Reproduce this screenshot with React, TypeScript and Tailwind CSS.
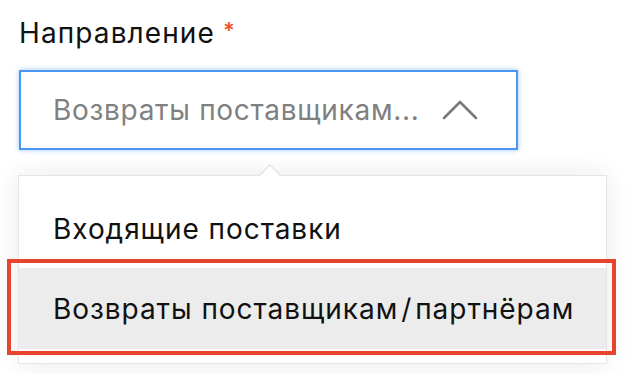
import React from 'react';

const font = { fontFamily: 'Inter, "Noto Sans", sans-serif' };

export default function App() {
  return (
    <div className="w-[640px] h-[374px] bg-white overflow-hidden text-[#111]" style={font}>
      {/* Field */}
      <div className="pl-[19px] pt-[19px]">
        <div className="flex items-start h-[28px]">
          <span className="text-[28px] leading-[28px] tracking-[1.1px]">Направление</span>
          <span className="ml-[8px] text-[22px] leading-[22px] text-[#f0522a] font-semibold">*</span>
        </div>
        <div className="mt-[23px] w-[499px] h-[80px] border-2 border-[#4a96f5] shadow-[0_0_5px_rgba(74,150,245,0.55)] flex items-center pl-[32px] pr-[38px]">
          <span className="flex-1 text-[28px] leading-none text-[#808080] whitespace-nowrap tracking-[0.7px]">Возвраты поставщикам...</span>
          <svg width="36" height="20" viewBox="0 0 36 20" fill="none" className="shrink-0">
            <path d="M2 18 L18 2 L34 18" stroke="#7a7a7a" strokeWidth="2.6" strokeLinecap="round" strokeLinejoin="round" />
          </svg>
        </div>
      </div>

      {/* Dropdown */}
      <div className="relative ml-[18px] mt-[25px] w-[589px] border border-[#e4e4ea] bg-white shadow-[0_0_24px_rgba(0,0,0,0.09)] pt-[14px] pb-[14px] text-[28px] leading-none tracking-[0.95px]">
        <div className="absolute left-[239px] -top-[12px] w-0 h-0 border-l-[12px] border-r-[12px] border-b-[12px] border-l-transparent border-r-transparent border-b-[#e4e4ea]" />
        <div className="absolute left-[240px] -top-[10px] w-0 h-0 border-l-[11px] border-r-[11px] border-b-[11px] border-l-transparent border-r-transparent border-b-white" />
        <div className="h-[78px] flex items-center pl-[34px]">Входящие поставки</div>
        <div className="relative h-[81px] flex items-center pl-[34px] bg-[#ececec]">
          Возвраты поставщикам<span className="mx-[3px]">/</span>партнёрам
          <div className="absolute -left-[12px] -right-[10px] -top-[9px] -bottom-[6px] border-[4px] border-[#e8432d]" />
        </div>
      </div>
    </div>
  );
}
